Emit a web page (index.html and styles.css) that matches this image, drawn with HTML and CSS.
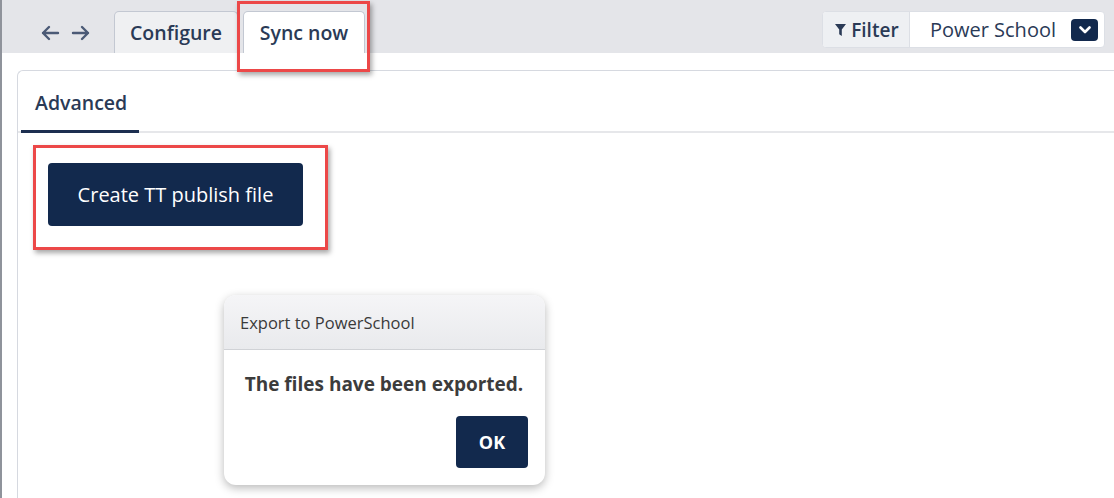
FILE: index.html
```html
<!DOCTYPE html>
<html>
<head>
<meta charset="utf-8">
<link rel="stylesheet" href="styles.css">
</head>
<body>
<div class="app">
  <header class="topbar">
    <div class="nav">
      <svg class="nav-icon" width="20" height="16" viewBox="0 0 20 16"><path d="M18 8H3M9 2L3 8l6 6" fill="none" stroke="#4b5a76" stroke-width="2.4" stroke-linecap="round" stroke-linejoin="round"/></svg>
      <svg class="nav-icon" width="20" height="16" viewBox="0 0 20 16"><path d="M2 8h15M11 2l6 6-6 6" fill="none" stroke="#4b5a76" stroke-width="2.4" stroke-linecap="round" stroke-linejoin="round"/></svg>
    </div>
    <div class="tabs">
      <div class="tab">Configure</div>
      <div class="tab tab-active">Sync now<span class="highlight highlight-tab"></span></div>
    </div>
    <div class="filter">
      <div class="filter-label">
        <svg width="11" height="12" viewBox="0 0 11 12"><path d="M0 0h11L6.8 5.6V12L4.2 10.2V5.6Z" fill="#2a3a56"/></svg>
        <span>Filter</span>
      </div>
      <div class="filter-value">
        <span>Power School</span>
        <span class="dropdown">
          <svg width="12" height="8" viewBox="0 0 12 8"><path d="M1.5 1.5L6 6l4.5-4.5" fill="none" stroke="#fff" stroke-width="2.6" stroke-linecap="round" stroke-linejoin="round"/></svg>
        </span>
      </div>
    </div>
  </header>
  <main class="content">
    <section class="panel">
      <nav class="subtabs">
        <div class="subtab">Advanced</div>
      </nav>
      <div class="panel-body">
        <div class="annot">
          <button class="primary">Create TT publish file</button>
        </div>
      </div>
    </section>
  </main>
  <div class="dialog">
    <div class="dialog-head">Export to PowerSchool</div>
    <div class="dialog-body">
      <p class="dialog-msg">The files have been exported.</p>
      <div class="dialog-actions"><button class="ok">OK</button></div>
    </div>
  </div>
</div>
</body>
</html>
```

FILE: styles.css
```css
* { box-sizing: border-box; }
html, body { margin: 0; padding: 0; background: #fff; }
body {
  font-family: "Open Sans", "Noto Sans", "Liberation Sans", sans-serif;
  color: #233a5e;
  width: 1114px;
  height: 498px;
  overflow: hidden;
}
.app {
  position: relative;
  height: 498px;
  border-left: 2px solid #8f939b;
  display: flex;
  flex-direction: column;
}
.topbar {
  height: 53px;
  flex: none;
  background: #e4e5e9;
  display: flex;
  align-items: flex-end;
  padding-left: 38px;
}
.nav {
  display: flex;
  gap: 11px;
  align-self: center;
  margin-top: 12px;
}
.nav-icon { display: block; }
.tabs {
  display: flex;
  gap: 5px;
  margin-left: 23px;
}
.tab {
  position: relative;
  height: 42px;
  padding: 0 0 1px;
  display: flex;
  align-items: center;
  font-size: 19.5px;
  font-weight: 600;
  background: #eff0f2;
  border: 1px solid #c3c8d2;
  border-bottom: none;
  border-radius: 5px 5px 0 0;
  color: #2a3a56;
}
.tab:first-child { width: 124px; justify-content: center; }
.tab-active {
  background: #fff;
  width: 122px;
  justify-content: center;
}
.highlight {
  position: absolute;
  border: 3px solid #ec4848;
  box-shadow: 2px 3px 5px rgba(0,0,0,0.35);
  pointer-events: none;
}
.highlight-tab {
  left: -7px;
  top: -11px;
  right: -6px;
  bottom: -19px;
}
.filter {
  margin-left: auto;
  margin-right: 9px;
  align-self: flex-start;
  margin-top: 11px;
  height: 37px;
  display: flex;
  border: 1px solid #dcdfe5;
  border-radius: 4px;
  overflow: hidden;
  background: #fff;
}
.filter-label {
  width: 87px;
  background: #eef0f3;
  border-right: 1px solid #dcdfe5;
  display: flex;
  align-items: center;
  justify-content: center;
  gap: 5px;
  font-size: 19px;
  font-weight: 600;
  color: #2a3a56;
  padding-left: 2px;
}
.filter-value {
  display: flex;
  align-items: center;
  padding-left: 20px;
  padding-right: 6px;
  gap: 15px;
  font-size: 20px;
  font-weight: 500;
  color: #2a3a56;
}
.dropdown {
  width: 27px;
  height: 22px;
  background: #12294d;
  border-radius: 4px;
  display: flex;
  align-items: center;
  justify-content: center;
}
.content {
  flex: 1;
  display: flex;
  padding: 17px 0 0 15px;
}
.panel {
  flex: 1;
  border: 1px solid #d6d9e0;
  border-right: none;
  border-bottom: none;
  border-radius: 6px 0 0 0;
  display: flex;
  flex-direction: column;
}
.subtabs {
  height: 62px;
  border-bottom: 2px solid #e6e7ea;
  display: flex;
  align-items: flex-end;
  padding-left: 3px;
}
.subtab {
  width: 118px;
  height: 62px;
  padding: 18px 0 0 14px;
  font-size: 19.5px;
  font-weight: 600;
  color: #2a3a56;
  border-bottom: 3px solid #1c2f50;
  margin-bottom: -2px;
}
.panel-body {
  padding: 12px 0 0 15px;
}
.annot {
  display: inline-block;
  border: 3px solid #ec4848;
  box-shadow: 2px 3px 5px rgba(0,0,0,0.35);
  padding: 15px 22px 21px 12px;
}
.primary {
  display: block;
  width: 255px;
  height: 63px;
  background: #12294d;
  color: #fff;
  border: none;
  border-radius: 4px;
  font-family: inherit;
  font-size: 20px;
  padding: 0;
}
.dialog {
  position: absolute;
  left: 222px;
  top: 295px;
  width: 321px;
  height: 190px;
  background: #fff;
  border-radius: 12px;
  box-shadow: 0 3px 10px rgba(0,0,0,0.28);
  overflow: hidden;
  display: flex;
  flex-direction: column;
}
.dialog-head {
  height: 55px;
  flex: none;
  background: linear-gradient(#f5f5f7, #e9eaed);
  border-bottom: 1px solid #d0d2d6;
  display: flex;
  align-items: center;
  padding-left: 16px;
  padding-top: 1px;
  font-size: 16.5px;
  color: #3a3a3a;
}
.dialog-body {
  flex: 1;
  display: flex;
  flex-direction: column;
  padding: 0 17px 0 16px;
}
.dialog-msg {
  margin: 21px 0 0;
  text-align: center;
  font-size: 19px;
  font-weight: 700;
  color: #3c3c3c;
  white-space: nowrap;
}
.dialog-actions {
  display: flex;
  justify-content: flex-end;
  margin-top: 19px;
}
.ok {
  width: 72px;
  height: 52px;
  background: #12294d;
  color: #fff;
  border: none;
  border-radius: 4px;
  font-family: inherit;
  font-size: 18px;
  font-weight: 700;
  padding: 0;
}
```
